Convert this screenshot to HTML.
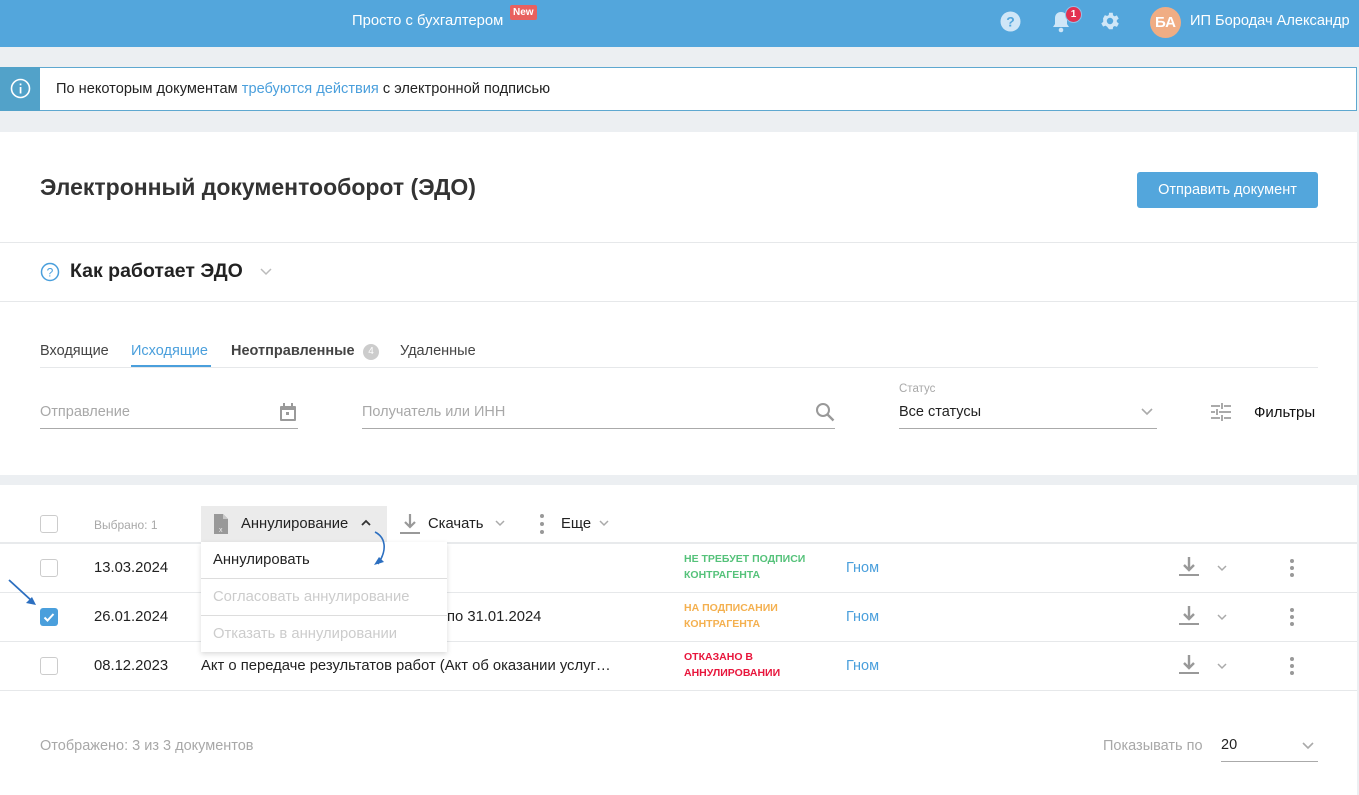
<!DOCTYPE html>
<html><head><meta charset="utf-8"><style>
*{box-sizing:border-box;margin:0;padding:0}
body{width:1359px;height:795px;overflow:hidden;background:#eceff2;font-family:"Liberation Sans",sans-serif;color:#333;position:relative}
.a{position:absolute;white-space:nowrap}
.hdr{left:0;top:0;width:1359px;height:47px;background:#53a6dc}
.w{background:#fff}
.line{position:absolute;height:1px;background:#e6e8ea}
.cb{position:absolute;width:18px;height:18px;border:1px solid #ccc;border-radius:3px;background:#fff}
.g{color:#a8a8a8}
.st{font-size:10.5px;font-weight:bold;line-height:16px}
.lnk{color:#4a9fdc;font-size:14.5px}
</style></head><body>
<div class="a hdr"></div>
<div class="a" style="left:352px;top:13px;color:#fff;font-size:14.8px">Просто с бухгалтером</div>
<div class="a" style="left:510px;top:5px;background:#e8615f;color:#fff;font-size:10px;font-weight:bold;padding:2px 3px;border-radius:2px">New</div>
<svg class="a" style="left:1000px;top:11px" width="21" height="21"><circle cx="10.5" cy="10.5" r="10" fill="#cfe6f7"/><text x="10.5" y="15.5" text-anchor="middle" font-size="14" font-weight="bold" fill="#53a6dc" font-family="Liberation Sans">?</text></svg>
<svg class="a" style="left:1050px;top:10px" width="22" height="24"><path d="M11 2c-4 0-6 3-6 6v6l-2 3h16l-2-3V8c0-3-2-6-6-6z" fill="#cfe6f7"/><circle cx="11" cy="20" r="2.3" fill="#cfe6f7"/></svg>
<div class="a" style="left:1065px;top:6px;width:17px;height:17px;border-radius:50%;background:#e33050;border:1px solid #8cc3ea;color:#fff;font-size:10px;font-weight:bold;text-align:center;line-height:15px">1</div>
<svg class="a" style="left:1099px;top:10px" width="22" height="22" viewBox="0 0 24 24"><path fill="#cfe6f7" d="M19.4 13a7.5 7.5 0 0 0 0-2l2.1-1.6-2-3.5-2.5 1a7 7 0 0 0-1.7-1L15 3h-4l-.4 2.6a7 7 0 0 0-1.7 1l-2.5-1-2 3.5L4.6 11a7.5 7.5 0 0 0 0 2l-2.1 1.6 2 3.5 2.5-1a7 7 0 0 0 1.7 1L11 21h4l.4-2.6a7 7 0 0 0 1.7-1l2.5 1 2-3.5zM12 15.5A3.5 3.5 0 1 1 12 8.5a3.5 3.5 0 0 1 0 7z"/></svg>
<div class="a" style="left:1150px;top:7px;width:31px;height:31px;border-radius:50%;background:#f0ad84;color:#fff;font-weight:bold;font-size:15px;text-align:center;line-height:31px">БА</div>
<div class="a" style="left:1190px;top:13px;color:#fff;font-size:14.6px">ИП Бородач Александр</div>

<div class="a" style="left:0;top:67px;width:1357px;height:44px;border:1px solid #5ea8d0;background:#fff"></div>
<div class="a" style="left:0;top:67px;width:40px;height:44px;background:#52a2c9"></div>
<svg class="a" style="left:10px;top:78px" width="21" height="21"><circle cx="10.5" cy="10.5" r="9" fill="none" stroke="#fff" stroke-width="1.6"/><rect x="9.7" y="9" width="1.7" height="6.5" fill="#fff"/><rect x="9.7" y="5.5" width="1.7" height="1.8" fill="#fff"/></svg>
<div class="a" style="left:56px;top:81px;font-size:14.6px;color:#222">По некоторым документам <span style="color:#4a9fdc">требуются действия</span> с электронной подписью</div>

<div class="a w" style="left:0;top:132px;width:1357px;height:343px"></div>
<div class="a" style="left:40px;top:174px;font-size:23px;font-weight:bold;color:#333">Электронный документооборот (ЭДО)</div>
<div class="a" style="left:1137px;top:172px;width:181px;height:36px;background:#53a6dc;border-radius:3px;color:#fff;font-size:14.5px;text-align:center;line-height:36px">Отправить документ</div>
<div class="line" style="left:0;top:242px;width:1357px"></div>
<svg class="a" style="left:40px;top:262px" width="20" height="20"><circle cx="10" cy="10" r="8.5" fill="none" stroke="#4a9fdc" stroke-width="1.5"/><text x="10" y="14.5" text-anchor="middle" font-size="12" fill="#4a9fdc" font-family="Liberation Sans">?</text></svg>
<div class="a" style="left:70px;top:260px;font-size:19.5px;font-weight:bold;color:#222">Как работает ЭДО</div>
<svg class="a" style="left:259px;top:267px" width="14" height="10"><path d="M2 2l5 5 5-5" fill="none" stroke="#bbb" stroke-width="1.5"/></svg>
<div class="line" style="left:0;top:301px;width:1357px"></div>

<div class="a" style="left:40px;top:343px;font-size:14.5px;color:#444">Входящие</div>
<div class="a" style="left:131px;top:343px;font-size:14.5px;color:#4a9fdc">Исходящие</div>
<div class="a" style="left:131px;top:365px;width:80px;height:2px;background:#4a9fdc"></div>
<div class="a" style="left:231px;top:343px;font-size:14.5px;font-weight:bold;color:#444">Неотправленные</div>
<div class="a" style="left:363px;top:344px;width:16px;height:16px;border-radius:50%;background:#ccc;color:#fff;font-size:10px;text-align:center;line-height:16px">4</div>
<div class="a" style="left:400px;top:343px;font-size:14.5px;color:#444">Удаленные</div>
<div class="line" style="left:40px;top:367px;width:1278px"></div>

<div class="a g" style="left:40px;top:404px;font-size:14.5px">Отправление</div>
<svg class="a" style="left:278px;top:402px" width="20" height="20"><rect x="2" y="4" width="16" height="15" rx="1" fill="#9a9a9a"/><rect x="4" y="8" width="12" height="9" fill="#fff"/><rect x="5" y="1" width="2" height="4" fill="#9a9a9a"/><rect x="13" y="1" width="2" height="4" fill="#9a9a9a"/><rect x="8" y="10" width="3" height="3" fill="#9a9a9a"/></svg>
<div class="a" style="left:40px;top:428px;width:258px;height:1px;background:#aaa"></div>
<div class="a g" style="left:362px;top:404px;font-size:14.5px">Получатель или ИНН</div>
<svg class="a" style="left:815px;top:402px" width="20" height="20"><circle cx="8" cy="8" r="6" fill="none" stroke="#999" stroke-width="2"/><path d="M12.5 12.5l6 6" stroke="#999" stroke-width="2.4"/></svg>
<div class="a" style="left:362px;top:428px;width:473px;height:1px;background:#aaa"></div>
<div class="a g" style="left:899px;top:383px;font-size:11.5px">Статус</div>
<div class="a" style="left:899px;top:404px;font-size:14.5px;color:#222">Все статусы</div>
<svg class="a" style="left:1140px;top:407px" width="14" height="10"><path d="M2 2l5 5 5-5" fill="none" stroke="#aaa" stroke-width="1.6"/></svg>
<div class="a" style="left:899px;top:428px;width:258px;height:1px;background:#aaa"></div>
<svg class="a" style="left:1210px;top:402px" width="22" height="20"><g stroke="#aaa" stroke-width="2"><path d="M1 4h9M14 4h7M1 10h4M9 10h12M1 16h9M14 16h7M12 1v6M7 7v6M12 13v6"/></g></svg>
<div class="a" style="left:1254px;top:404px;font-size:15px;color:#111">Фильтры</div>

<div class="a w" style="left:0;top:485px;width:1357px;height:310px"></div>
<div class="cb" style="left:40px;top:515px"></div>
<div class="a g" style="left:94px;top:518px;font-size:12px">Выбрано: 1</div>
<div class="a" style="left:201px;top:506px;width:186px;height:36px;background:#ebebeb"></div>
<svg class="a" style="left:213px;top:513px" width="16" height="22"><path d="M1 1h9l5 5v15H1z" fill="#999"/><path d="M10 1v5h5" fill="#c8c8c8"/><text x="6" y="19" font-size="7" fill="#eee" font-family="Liberation Sans">x</text></svg>
<div class="a" style="left:241px;top:516px;font-size:14.8px;color:#222">Аннулирование</div>
<svg class="a" style="left:360px;top:518px" width="12" height="10"><path d="M2 7l4-4 4 4" fill="none" stroke="#333" stroke-width="1.8"/></svg>
<svg class="a" style="left:399px;top:512px" width="22" height="24"><path d="M11 2v13M6 10l5 5 5-5" fill="none" stroke="#999" stroke-width="2.2"/><rect x="1" y="20" width="20" height="2" fill="#999"/></svg>
<div class="a" style="left:428px;top:516px;font-size:14.8px;color:#222">Скачать</div>
<svg class="a" style="left:494px;top:519px" width="12" height="8"><path d="M2 2l4 4 4-4" fill="none" stroke="#aaa" stroke-width="1.5"/></svg>
<svg class="a" style="left:539px;top:513px" width="6" height="22"><circle cx="3" cy="3" r="2" fill="#999"/><circle cx="3" cy="11" r="2" fill="#999"/><circle cx="3" cy="19" r="2" fill="#999"/></svg>
<div class="a" style="left:561px;top:516px;font-size:14.8px;color:#222">Еще</div>
<svg class="a" style="left:598px;top:519px" width="12" height="8"><path d="M2 2l4 4 4-4" fill="none" stroke="#aaa" stroke-width="1.5"/></svg>
<div class="a" style="left:0;top:542px;width:1357px;height:2px;background:#e8eaec"></div>

<div class="cb" style="left:40px;top:559px"></div>
<div class="a" style="left:94px;top:560px;font-size:14.8px;color:#222">13.03.2024</div>
<div class="a st" style="left:684px;top:551px;color:#55c27a">НЕ ТРЕБУЕТ ПОДПИСИ<br>КОНТРАГЕНТА</div>
<div class="a lnk" style="left:846px;top:560px">Гном</div>
<div class="line" style="left:0;top:592px;width:1357px"></div>

<div class="a" style="left:40px;top:608px;width:18px;height:18px;border-radius:3px;background:#4a9fdc"></div>
<svg class="a" style="left:40px;top:608px" width="18" height="18"><path d="M4.5 9.5l3 3 6-6.5" fill="none" stroke="#fff" stroke-width="2"/></svg>
<div class="a" style="left:94px;top:609px;font-size:14.8px;color:#222">26.01.2024</div>
<div class="a" style="left:447px;top:609px;font-size:14.8px;color:#222">по 31.01.2024</div>
<div class="a st" style="left:684px;top:600px;color:#f4b04f">НА ПОДПИСАНИИ<br>КОНТРАГЕНТА</div>
<div class="a lnk" style="left:846px;top:609px">Гном</div>
<div class="line" style="left:0;top:641px;width:1357px"></div>

<div class="cb" style="left:40px;top:657px"></div>
<div class="a" style="left:94px;top:658px;font-size:14.8px;color:#222">08.12.2023</div>
<div class="a" style="left:201px;top:658px;font-size:14.8px;color:#222">Акт о передаче результатов работ (Акт об оказании услуг…</div>
<div class="a st" style="left:684px;top:649px;color:#e8163c">ОТКАЗАНО В<br>АННУЛИРОВАНИИ</div>
<div class="a lnk" style="left:846px;top:658px">Гном</div>
<div class="line" style="left:0;top:690px;width:1357px"></div>

<svg class="a" style="left:1178px;top:556px" width="22" height="124">
<g fill="none" stroke="#999" stroke-width="2.4"><path d="M11 1v13M6 9l5 5 5-5M11 50v13M6 58l5 5 5-5M11 99v13M6 107l5 5 5-5"/></g>
<g fill="#999"><rect x="1" y="18" width="20" height="2"/><rect x="1" y="67" width="20" height="2"/><rect x="1" y="116" width="20" height="2"/></g></svg>
<svg class="a" style="left:1215px;top:563px" width="14" height="110"><g fill="none" stroke="#aaa" stroke-width="1.5"><path d="M3 3l4 4 4-4M3 52l4 4 4-4M3 101l4 4 4-4"/></g></svg>
<svg class="a" style="left:1289px;top:558px" width="6" height="122"><g fill="#999"><circle cx="3" cy="3" r="2"/><circle cx="3" cy="10" r="2"/><circle cx="3" cy="17" r="2"/><circle cx="3" cy="52" r="2"/><circle cx="3" cy="59" r="2"/><circle cx="3" cy="66" r="2"/><circle cx="3" cy="101" r="2"/><circle cx="3" cy="108" r="2"/><circle cx="3" cy="115" r="2"/></g></svg>

<div class="a" style="left:201px;top:542px;width:246px;height:110px;background:#fff;box-shadow:0 2px 5px rgba(0,0,0,.15)"></div>
<div class="a" style="left:213px;top:552px;font-size:14.8px;color:#222">Аннулировать</div>
<div class="a" style="left:201px;top:578px;width:246px;height:1px;background:#ddd"></div>
<div class="a" style="left:213px;top:589px;font-size:14.8px;color:#ccc">Согласовать аннулирование</div>
<div class="a" style="left:201px;top:615px;width:246px;height:1px;background:#ddd"></div>
<div class="a" style="left:213px;top:626px;font-size:14.8px;color:#ccc">Отказать в аннулировании</div>
<svg class="a" style="left:365px;top:528px" width="30" height="40"><path d="M10 4c10 5 13 17 3 32" fill="none" stroke="#2c6fc0" stroke-width="1.6"/><path d="M9 37l10-3-5-5z" fill="#2c6fc0"/></svg>
<svg class="a" style="left:6px;top:577px" width="34" height="34"><path d="M3 3l24 22" stroke="#2c6fc0" stroke-width="1.8"/><path d="M30 28l-10-2 6-6z" fill="#2c6fc0"/></svg>

<div class="a g" style="left:40px;top:738px;font-size:14.5px">Отображено: 3 из 3 документов</div>
<div class="a g" style="left:1103px;top:738px;font-size:14.5px">Показывать по</div>
<div class="a" style="left:1221px;top:737px;font-size:14.5px;color:#222">20</div>
<svg class="a" style="left:1301px;top:741px" width="14" height="10"><path d="M2 2l5 5 5-5" fill="none" stroke="#aaa" stroke-width="1.6"/></svg>
<div class="a" style="left:1221px;top:761px;width:97px;height:1px;background:#aaa"></div>
</body></html>
